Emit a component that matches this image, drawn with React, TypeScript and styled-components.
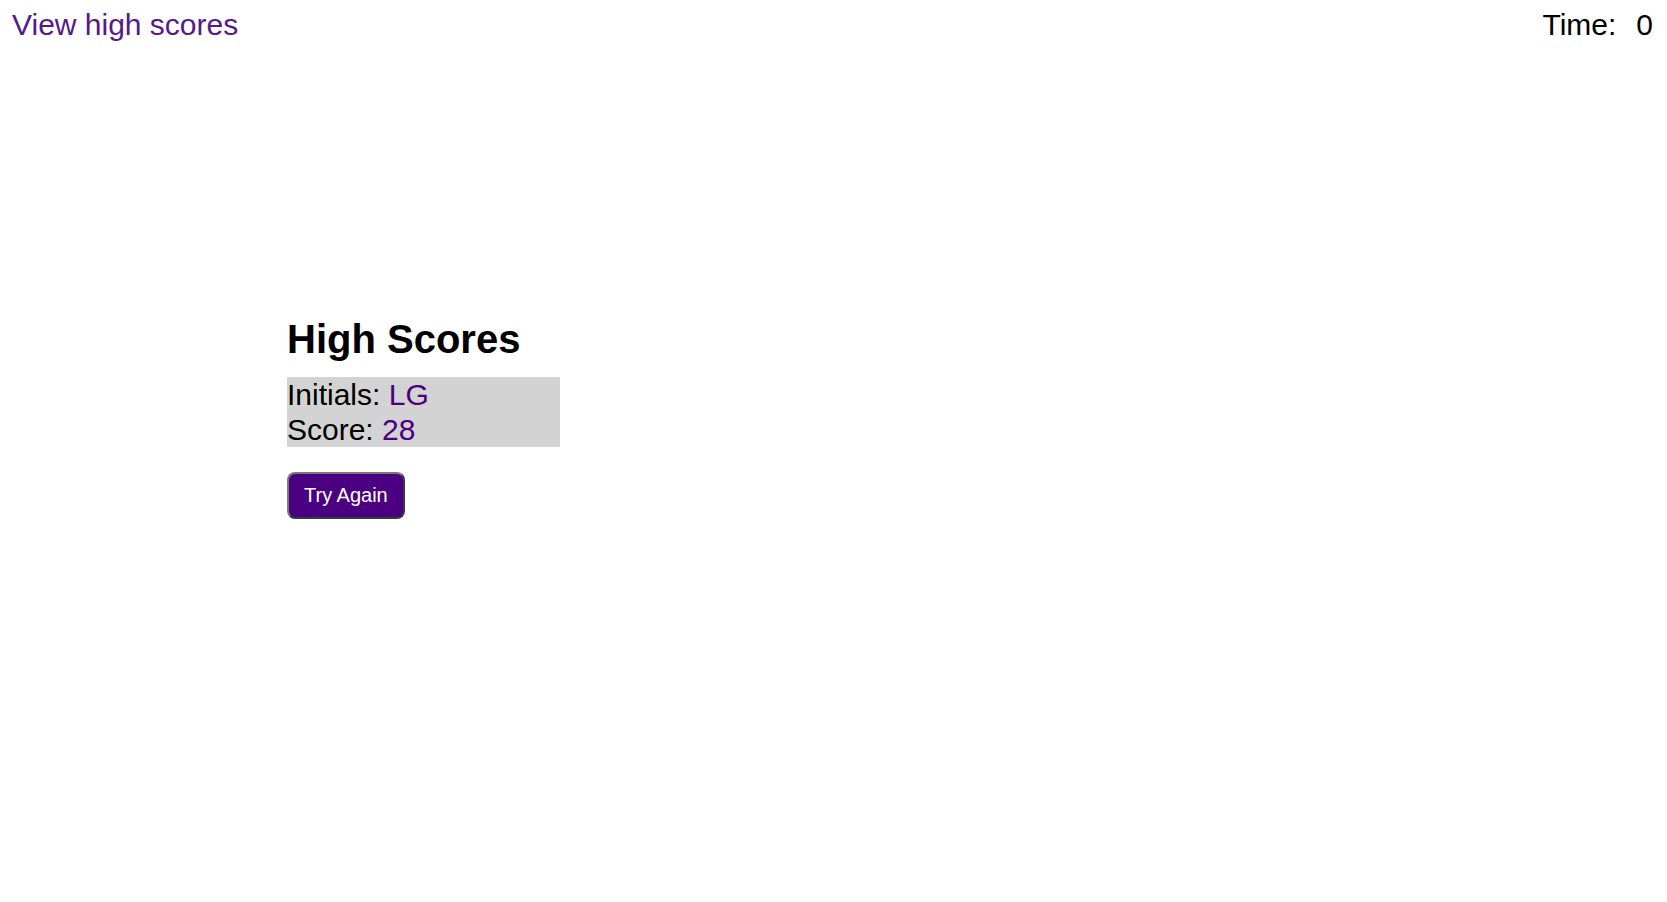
import React from 'react'
import { styled, createGlobalStyle } from 'styled-components'

const GlobalStyle = createGlobalStyle`
    html, body {
        margin: 0;
        padding: 0;
        background: #ffffff;
        font-family: "Liberation Sans", Arial, Helvetica, sans-serif;
    }
`

const TopBar = styled.header`
    display: flex;
    justify-content: space-between;
    align-items: center;
    padding: 8px 14px 0 12px;
    font-size: 30px;
    line-height: 34.5px;
`

const HighScoresLink = styled.a`
    color: #551a8b;
    text-decoration: none;
    cursor: pointer;
`

const Timer = styled.div`
    display: flex;
    gap: 20px;
    color: #000000;
`

const Main = styled.main`
    padding: 274px 0 0 287px;
`

const Title = styled.h1`
    margin: 0 0 15px;
    font-size: 40px;
    line-height: 45px;
    font-weight: bold;
    color: #000000;
`

const ScoreCard = styled.div`
    width: 273px;
    background: #d3d3d3;
    font-size: 30px;
    line-height: 35px;
    color: #000000;
`

const Value = styled.span`
    color: #4b0082;
`

const Boton = styled.button`
    margin-top: 25px;
    padding: 10px 15px;
    background: #4b0082;
    color: #ffffff;
    font-family: "Liberation Sans", Arial, Helvetica, sans-serif;
    font-size: 20px;
    line-height: 23px;
    border: 2px solid;
    border-color: #7a7a7a #3a3a3a #3a3a3a #7a7a7a;
    border-radius: 8px;
    cursor: pointer;
`

const App = () => {
    const score = { initials: 'LG', value: 28 }
    const time = 0

    return (
        <>
            <GlobalStyle />
            <TopBar>
                <HighScoresLink>View high scores</HighScoresLink>
                <Timer>
                    <span>Time:</span>
                    <span>{time}</span>
                </Timer>
            </TopBar>
            <Main>
                <Title>High Scores</Title>
                <ScoreCard>
                    <div>Initials: <Value>{score.initials}</Value></div>
                    <div>Score: <Value>{score.value}</Value></div>
                </ScoreCard>
                <Boton>Try Again</Boton>
            </Main>
        </>
    )
}

export default App
